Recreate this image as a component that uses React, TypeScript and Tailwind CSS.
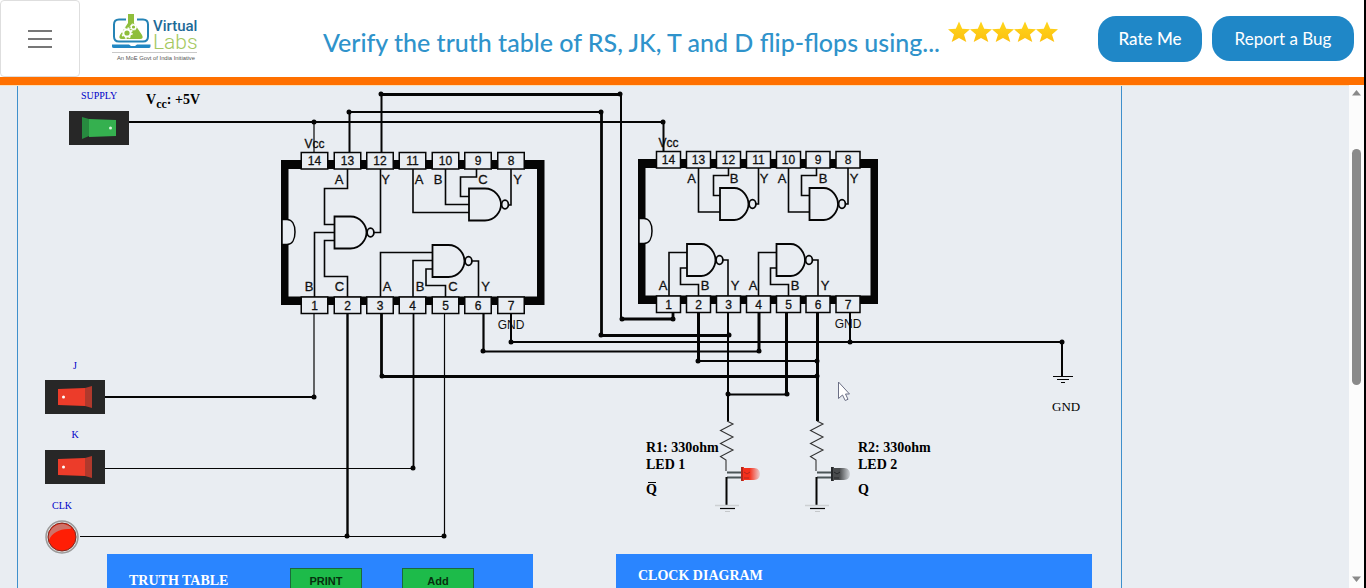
import React from "react";

const INK = "#050505";
const BOARD = "#e9edf2";

type Point = [number, number];

function Wire({ d, w = 2 }: { d: string; w?: number }) {
  return <path d={d} fill="none" stroke={INK} strokeWidth={w} />;
}

function Gate({ x, y, w = 32 }: { x: number; y: number; w?: number }) {
  const mid = x + w / 2;
  const right = x + w;
  return (
    <g fill={BOARD} stroke={INK} strokeWidth={1.8}>
      <path
        d={`M${x} ${y}H${mid}C${right - 6} ${y} ${right} ${y + 9} ${right} ${y + 16}C${right} ${y + 23} ${right - 6} ${y + 32} ${mid} ${y + 32}H${x}Z`}
      />
      <ellipse cx={right + 4} cy={y + 16} rx={3.4} ry={4.3} />
    </g>
  );
}

interface ChipProps {
  left: number;
  right: number;
  top: number;
  bottom: number;
  pins: number[];
  pinWidth: number;
  topLetters: [string, number][];
  bottomLetters: [string, number][];
  wires: string[];
  gates: Point[];
  gateWidth: number;
}

function Chip(p: ChipProps) {
  const notch = p.top + 59.5;
  return (
    <g fontFamily="'Liberation Sans', Arial, sans-serif" textAnchor="middle" fill="#111">
      <rect x={p.left} y={p.top} width={p.right - p.left} height={p.bottom - p.top} fill={INK} />
      <rect x={p.left + 7.5} y={p.top + 9} width={p.right - p.left - 15} height={p.bottom - p.top - 17.5} fill={BOARD} />
      <path
        d={`M${p.left + 1} ${notch}h5c5 0 8 5 8 12.5s-3 12.5 -8 12.5h-5z`}
        fill={BOARD}
        stroke={INK}
        strokeWidth={1.5}
      />
      {p.wires.map((d) => (
        <path key={d} d={d} fill="none" stroke={INK} strokeWidth={1.6} />
      ))}
      {p.gates.map(([x, y]) => (
        <Gate key={`${x}-${y}`} x={x} y={y} w={p.gateWidth} />
      ))}
      {p.pins.map((x, i) => (
        <g key={x} fontSize={12} stroke="#111" strokeWidth={0.3}>
          <rect x={x - p.pinWidth / 2} y={p.top - 7.5} width={p.pinWidth} height={16.5} fill={BOARD} stroke={INK} strokeWidth={1.5} />
          <text x={x} y={p.top + 5}>{14 - i}</text>
          <rect x={x - p.pinWidth / 2} y={p.bottom - 8} width={p.pinWidth} height={16.5} fill={BOARD} stroke={INK} strokeWidth={1.5} />
          <text x={x} y={p.bottom + 4.5}>{i + 1}</text>
        </g>
      ))}
      <g fontSize={13} stroke="#111" strokeWidth={0.3}>
        {p.topLetters.map(([t, x]) => (
          <text key={x} x={x} y={p.top + 24}>{t}</text>
        ))}
        {p.bottomLetters.map(([t, x]) => (
          <text key={x} x={x} y={p.bottom - 14}>{t}</text>
        ))}
        <text x={p.pins[0]} y={p.top - 12} fontSize={12}>Vcc</text>
        <text x={p.pins[6]} y={p.bottom + 24} fontSize={12} strokeWidth={0}>GND</text>
      </g>
    </g>
  );
}

function Led({ x, color, dark, id }: { x: number; color: string; dark: string; id: string }) {
  return (
    <g>
      <defs>
        <linearGradient id={id}>
          <stop offset="0.45" stopColor={color} />
          <stop offset="1" stopColor={color} stopOpacity="0.15" />
        </linearGradient>
      </defs>
      <path
        d={`M${x} 421l6 3l-12.5 6.5l12.5 6.5l-12.5 6.5l12.5 6.5l-12.5 6.500l5.5 3.5v11`}
        fill="none"
        stroke="#333"
        strokeWidth={1.1}
      />
      <path d={`M${x} 472.5h15M${x} 477.5h15`} stroke="#4b5557" strokeWidth={1.8} />
      <path d={`M${x - 0.5} 477v29`} stroke={INK} strokeWidth={2} />
      <path d={`M${x + 14} 467h3v1h10c8 0 8 12 0 12h-10v1h-3z`} fill={`url(#${id})`} />
      <path d={`M${x + 14} 467h2v14h-2z`} fill={dark} />
      <path d={`M${x + 17} 472l3 2l3 -2M${x + 17} 478h5`} stroke={dark} fill="none" />
      <path d={`M${x - 12} 505.5h24`} stroke="#cdd0d3" strokeWidth={1.5} />
      <path d={`M${x - 7} 508.5h15`} stroke={INK} strokeWidth={1.2} />
      <path d={`M${x - 2} 511.5h5`} stroke="#c4c7ca" />
    </g>
  );
}

const DOTS: Point[] = [
  [314, 122], [663, 122], [349, 112], [601, 112], [381, 94], [620, 94],
  [622, 319], [673, 319], [601, 335], [729, 335], [511, 342], [850, 342],
  [1062, 342], [483, 351], [759, 351], [698, 361], [817, 361], [382, 376],
  [817, 376], [728, 394], [787, 394], [314, 397], [413, 468], [347, 536], [444, 536],
];

function Circuit() {
  return (
    <svg width="1103" height="468" viewBox="18 86 1103 468" className="block" role="img" aria-label="JK flip-flop circuit">
      <Chip
        left={281} right={544.5} top={160} bottom={305} pinWidth={26.5}
        pins={[314.5, 347.5, 380, 412.5, 445.5, 478, 511]}
        topLetters={[["A", 339], ["Y", 385.5], ["A", 419], ["B", 438], ["C", 483], ["Y", 517.5]]}
        bottomLetters={[["B", 309], ["C", 339.5], ["A", 387], ["B", 420], ["C", 453], ["Y", 485.5]]}
        gateWidth={32}
        gates={[[334.5, 216.5], [432.5, 245], [469, 188.5]]}
        wires={[
          "M347.5 169V188.5H324.5V224.5H334",
          "M380.5 169V232.5H374",
          "M314.5 297V232.5H334",
          "M347.5 297V276.5H324.5V240.5H334",
          "M380.5 297V252.5H432",
          "M413 297V260.5H432",
          "M445.5 297V285.5H426V269H432",
          "M478.5 297V261H472",
          "M413 169V212.5H469",
          "M445.5 169V204.5H469",
          "M476.5 169V177H460.5V196.5H469",
          "M511 169V205H508",
        ]}
      />
      <Chip
        left={638} right={878} top={159} bottom={304} pinWidth={24}
        pins={[668.5, 698.5, 728.5, 758.5, 788.5, 818, 848]}
        topLetters={[["A", 691.5], ["B", 734], ["Y", 764], ["A", 782], ["B", 823], ["Y", 854]]}
        bottomLetters={[["A", 663], ["B", 705], ["Y", 735], ["A", 753], ["B", 795], ["Y", 825]]}
        gateWidth={28.5}
        gates={[[720, 188], [809.5, 188], [687, 244], [776.5, 244]]}
        wires={[
          "M698.5 168V212H720",
          "M728.5 168V175.5H713.5V195.5H720",
          "M758.5 168V204H755",
          "M788.5 168V212H809",
          "M816.5 168V175.5H801.5V195.5H809",
          "M848 168V204H845",
          "M669 296V252.5H687",
          "M698.5 296V284.5H680.5V268H687",
          "M728 296V260H723",
          "M758.5 296V252.5H776",
          "M788.5 296V284.5H770.5V268H776",
          "M818 296V260H813",
        ]}
      />

      <Wire d="M129 122H663.5V152" />
      <Wire d="M314 122V152" w={1.2} />
      <Wire d="M349.5 152V112H601" />
      <Wire d="M601.5 112V335.5H729" w={2.8} />
      <Wire d="M381.5 152V94" />
      <Wire d="M381 94.5H621" w={3} />
      <Wire d="M621 94V319" />
      <Wire d="M621 319H673V312" w={2.8} />
      <Wire d="M314 313V397" w={1.2} />
      <Wire d="M104 397H314" />
      <Wire d="M347.5 313V536" w={2.4} />
      <Wire d="M381.5 313V376.5H817" w={2.8} />
      <Wire d="M413.5 313V468" w={1.8} />
      <Wire d="M104 468.5H413" w={1} />
      <Wire d="M444.5 313V536" w={1.2} />
      <Wire d="M80 536.5H444" w={1} />
      <Wire d="M483.5 313V351.5H759" w={2.2} />
      <Wire d="M511 313V342H1062V376" />
      <Wire d="M698.5 312V361" w={3} />
      <Wire d="M698 361H817" />
      <Wire d="M728 312V421" />
      <Wire d="M759 312V351" w={3} />
      <Wire d="M786.5 312V394" w={3} />
      <Wire d="M728 394.5H787" />
      <Wire d="M817.5 312V421" w={3} />
      <Wire d="M850 312V342" />
      {DOTS.map(([x, y]) => (
        <circle key={`${x}-${y}`} cx={x} cy={y} r={2.5} fill={INK} />
      ))}

      <path d="M1053 376.5H1073M1057 379.5H1069M1061 382.5H1065" stroke={INK} strokeWidth={1.2} />
      <Led x={727} color="#f5301c" dark="#b0281c" id="led-red" />
      <Led x={817} color="#4a4c4e" dark="#26282a" id="led-off" />

      <g fontFamily="'Liberation Serif', 'Times New Roman', serif" fill="#000">
        <g fontWeight="bold" fontSize={14}>
          <text x={146} y={104}>
            V<tspan dy={4} fontSize={12}>cc</tspan><tspan dy={-4}>: +5V</tspan>
          </text>
          <text x={646} y={452}>R1: 330ohm</text>
          <text x={646} y={469}>LED 1</text>
          <text x={646} y={494}>Q</text>
          <text x={858} y={452}>R2: 330ohm</text>
          <text x={858} y={469}>LED 2</text>
          <text x={858} y={494}>Q</text>
        </g>
        <text x={1052} y={411} fontSize={13}>GND</text>
      </g>
      <path d="M648 482.5h8" stroke={INK} />
      <path
        d="M838.5 382V398.5L842.5 395L845.2 400.5L848 399.3L845.5 394H849.5Z"
        fill="#fff"
        stroke="#6b6f85"
        strokeWidth={1}
      />
    </svg>
  );
}

function Rocker({ on }: { on?: boolean }) {
  return (
    <svg width="60" height="34" viewBox="0 0 60 34" className="block">
      <rect width="60" height="34" fill="#272727" />
      {on ? (
        <>
          <path d="M13 6l7 2v17l-7 3z" fill="#278a3f" />
          <path d="M20 8l27 1v16l-27 1z" fill="#35b04f" />
          <circle cx="41.5" cy="17" r="1.5" fill="#d8f5dc" />
        </>
      ) : (
        <>
          <path d="M13 9l27-1v18l-27-1z" fill="#ec3c2a" />
          <path d="M40 8l7-2v22l-7-2z" fill="#b0392c" />
          <circle cx="18.5" cy="17" r="1.5" fill="#fff" />
        </>
      )}
    </svg>
  );
}

function Control({ id, label, className, children }: { id: string; label: string; className: string; children: React.ReactNode }) {
  return (
    <div className={`absolute flex flex-col items-center ${className}`}>
      <label htmlFor={id} className="font-['Liberation_Serif',serif] text-[10px] leading-3 text-[#0000c8]">{label}</label>
      <button id={id} type="button" className="block">{children}</button>
    </div>
  );
}

function Logo() {
  return (
    <svg width="92" height="50" viewBox="110 13 92 50" className="block" role="img" aria-label="Virtual Labs">
      <path d="M126 19.5h-7q-5 0-5 5v12q0 5 5 5h24q5 0 5-5v-12q0-5-5-5h-6" fill="none" stroke="#2583b5" strokeWidth="2" />
      <path d="M112 44.5h17l2 1.5h4l2-1.5h13.5v2q0 1.500-2 1.500h-34.500q-2 0-2-1.500z" fill="#2187c4" />
      <path d="M128 14h6v9l8 12q2 4-2 4h-18q-4 0-2-4l8-12z" fill="#8fbe3c" />
      <circle cx="127" cy="33" r="3.6" fill="none" stroke="#fff" strokeWidth="2" />
      <circle cx="127" cy="33" r="5" fill="none" stroke="#fff" strokeWidth="1.4" strokeDasharray="2 1.93" />
      <circle cx="133.5" cy="27" r="2.3" fill="none" stroke="#fff" strokeWidth="1.4" />
      <circle cx="133.5" cy="27" r="3.3" fill="none" stroke="#fff" strokeWidth="1" strokeDasharray="1.3 1.29" />
      <text x="153" y="31" fontFamily="Roboto, sans-serif" fontWeight="500" fontSize="15" fill="#1d6a97">Virtual</text>
      <text x="153" y="49" fontFamily="Roboto, sans-serif" fontWeight="300" fontSize="21" fill="#a4c860">Labs</text>
      <path d="M112 52.5h85" stroke="#c9c9c9" />
      <text x="117" y="60" fontFamily="'Liberation Sans', sans-serif" fontSize="5.8" fill="#555">An MoE Govt of India Initiative</text>
    </svg>
  );
}

function Star() {
  return (
    <svg width="22" height="22" viewBox="0 0 22 22" className="block">
      <defs>
        <linearGradient id="star-fill" x1="0" y1="0" x2="0" y2="1">
          <stop offset="0" stopColor="#ffd61c" />
          <stop offset="1" stopColor="#fcc010" />
        </linearGradient>
      </defs>
      <path d="M11 0.5l3.2 7.2l7.8 0.6l-6 5.300l2.300 7.400l-7.300-4l-7.300 4l2.300-7.400l-6-5.300l7.800-0.600z" fill="url(#star-fill)" />
    </svg>
  );
}

export default function App() {
  return (
    <div className="flex h-screen flex-col overflow-hidden border-r-2 border-black bg-[#e9edf2]">
      <header className="flex h-[85px] shrink-0 items-start border-b-8 border-[#ff7000] bg-white">
        <button type="button" aria-label="Menu" className="flex h-[77px] w-20 shrink-0 flex-col items-center justify-center gap-[6px] rounded border border-[#dedede]">
          <span className="h-0.5 w-6 bg-[#777]" />
          <span className="h-0.5 w-6 bg-[#777]" />
          <span className="h-0.5 w-6 bg-[#777]" />
        </button>
        <a href="#home" className="ml-[30px] mt-[13px] shrink-0">
          <Logo />
        </a>
        <div className="mr-10 flex min-w-0 flex-1 justify-end">
          <h1 className="mt-6 whitespace-nowrap font-[Lato,sans-serif] text-[25px] font-medium leading-9 text-[#2f93cb]">
            Verify the truth table of RS, JK, T and D flip-flops using...
          </h1>
          <div className="ml-2 mt-[21px] flex shrink-0" role="img" aria-label="5 stars">
            <Star /><Star /><Star /><Star /><Star />
          </div>
        </div>
        <div className="mr-[10px] mt-4 flex shrink-0 gap-[10px] font-[Lato,sans-serif] text-[17px] text-white">
          <button type="button" className="h-[46px] w-[104px] rounded-[18px] bg-[#1f87c7] font-medium">Rate Me</button>
          <button type="button" className="h-[45px] w-[142px] rounded-[18px] bg-[#1f87c7]">Report a Bug</button>
        </div>
      </header>

      <div className="flex min-h-0 flex-1">
        <main className="min-w-0 flex-1 overflow-hidden border-t border-[#f8dfba]">
          <section className="relative ml-[17px] w-full max-w-[1105px] border-x border-x-[#3f90cc]">
            <Circuit />
            <Control id="supply" label="SUPPLY" className="left-[51px] top-1 gap-[9px]"><Rocker on /></Control>
            <Control id="input-j" label="J" className="left-[27px] top-[274px] gap-2"><Rocker /></Control>
            <Control id="input-k" label="K" className="left-[27px] top-[343px] gap-[9px]"><Rocker /></Control>
            <Control id="clock" label="CLK" className="left-[27px] top-[414px] gap-2">
              <svg width="34" height="34" viewBox="0 0 34 34" className="block">
                <circle cx="17" cy="17" r="16" fill="#dcdcdc" stroke="#9a9a9a" strokeWidth="1.5" />
                <circle cx="17" cy="17" r="14" fill="#ff1e05" stroke="#7a2a22" strokeWidth="1" />
                <path d="M4 20C2 8 14 0 24 6C27 8 27 9 23 9C14 9 7 13 4 20Z" fill="#c5837b" opacity="0.85" />
              </svg>
            </Control>

            <div className="flex items-start gap-[83px] pl-[89px] pr-[29px]">
              <section className="flex h-40 w-[426px] items-start bg-[#2a85ff] pl-[22px] pt-[14px]">
                <h2 className="mt-[5px] w-[161px] font-['Liberation_Serif',serif] text-[14px] font-bold leading-4 text-white">TRUTH TABLE</h2>
                <div className="flex gap-10 font-['Liberation_Sans',sans-serif] text-[11px] font-bold text-[#06300f]">
                  <button type="button" className="h-[26px] w-[72px] border border-[#1b6a3a] bg-[#1dbb4a]">PRINT</button>
                  <button type="button" className="h-[26px] w-[72px] border border-[#1b6a3a] bg-[#1dbb4a]">Add</button>
                </div>
              </section>
              <section className="h-40 flex-1 bg-[#2a85ff] pl-[22px] pt-[14px]">
                <h2 className="font-['Liberation_Serif',serif] text-[14px] font-bold leading-4 text-white">CLOCK DIAGRAM</h2>
              </section>
            </div>
          </section>
        </main>
        <div className="flex w-[15px] shrink-0 flex-col items-center bg-[#fcfcfc] pb-[6px] pt-[5px]" aria-hidden="true">
          <svg width="9" height="6" viewBox="0 0 9 6"><path d="M4.5 0L9 5.5H0Z" fill="#8a8a8a" /></svg>
          <div className="flex w-full flex-1 flex-col items-center pt-[53px]">
            <div className="h-[236px] w-[9px] rounded-full bg-[#8a8a8a]" />
          </div>
          <svg width="9" height="6" viewBox="0 0 9 6"><path d="M0 0.5H9L4.5 6Z" fill="#8a8a8a" /></svg>
        </div>
      </div>
    </div>
  );
}
